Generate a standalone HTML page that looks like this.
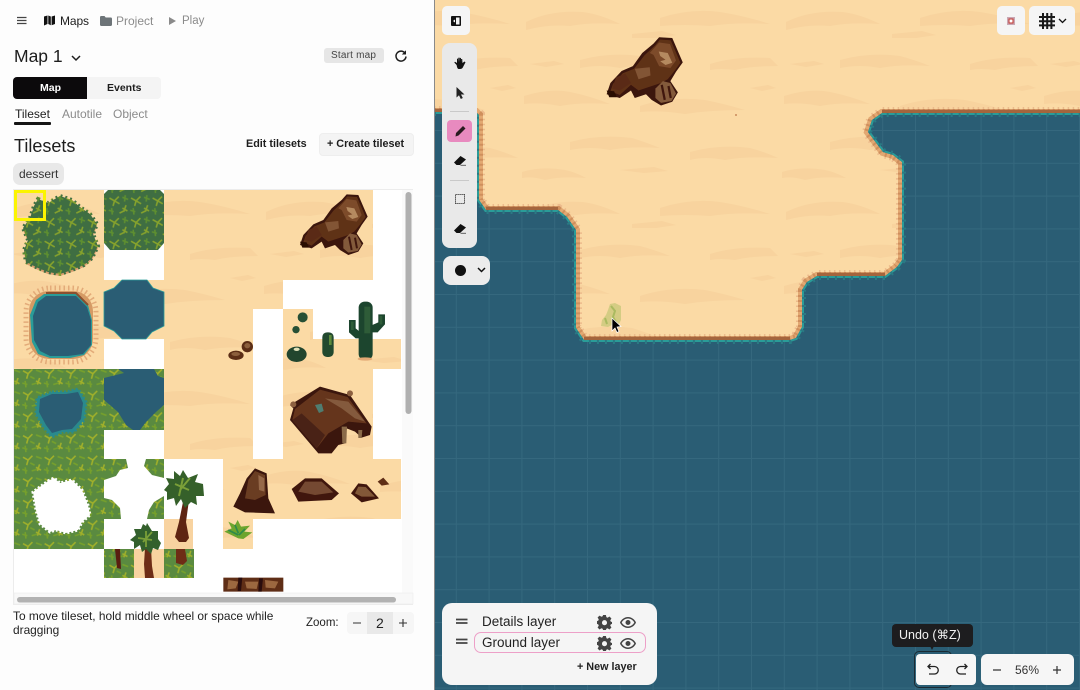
<!DOCTYPE html>
<html><head><meta charset="utf-8"><title>Map editor</title>
<style>
html,body{margin:0;padding:0;width:1080px;height:690px;overflow:hidden;background:#fff}
body{position:relative;font-family:"Liberation Sans","DejaVu Sans",sans-serif;color:#1d1d1d}
.t{position:absolute;white-space:nowrap;line-height:1}
.b{position:absolute}
svg.i{position:absolute;overflow:visible}
</style></head><body>
<svg class="i" style="left:0;top:0" width="1080" height="690" viewBox="0 0 1080 690">
<defs>
<filter id="soft" x="-5%" y="-5%" width="110%" height="110%"><feGaussianBlur stdDeviation=".8"/></filter>
<pattern id="sand" patternUnits="userSpaceOnUse" width="260" height="190">
<rect width="260" height="190" fill="#fbdaa5"/>
<g fill="#f8d39e">
<path d="M6 22Q30 10 62 12Q80 14 100 24Q70 22 50 26Q28 24 6 30Z"/>
<path d="M140 18Q170 8 200 12Q225 16 250 24Q215 22 190 26Q165 24 140 26Z"/>
<path d="M60 60Q90 52 120 56Q135 60 150 66Q120 64 100 68Q80 64 60 68Z"/>
<path d="M190 64Q215 56 250 58L258 66Q230 66 215 70Q200 68 190 70Z"/>
<path d="M4 96Q30 88 50 92Q70 96 90 104Q60 102 40 106Q20 102 4 104Z"/>
<path d="M120 106Q150 96 185 100Q205 104 225 110Q190 110 165 114Q140 110 120 112Z"/>
<path d="M50 142Q80 134 112 138Q125 142 140 148Q110 146 90 150Q70 146 50 150Z"/>
<path d="M170 152Q200 144 230 148Q245 152 258 158Q225 156 205 160Q185 156 170 160Z"/>
<path d="M2 172Q22 166 45 170Q55 172 66 178Q40 176 25 180Q12 176 2 178Z"/>
<path d="M112 34l30-3 14 4-20 3-24 0z"/>
<path d="M10 64l24-3 10 3-18 3z"/>
<path d="M230 88l18-3 8 3-14 3z"/>
<path d="M100 170l34-3 14 4-24 2z"/>
</g>
</pattern>
<pattern id="grid" patternUnits="userSpaceOnUse" x="915" y="130" width="32.8" height="32.8">
<rect width="32.8" height="32.8" fill="#2a5d74"/>
<path d="M.5 0V32.8M0 .5H32.8" stroke="#35687e" stroke-width="1" fill="none"/>
</pattern>
<pattern id="grass" patternUnits="userSpaceOnUse" width="30" height="30" patternTransform="scale(.72)">
<rect width="30" height="30" fill="#3f6e42"/>
<g fill="none" stroke="#86a22c" stroke-width="2.200">
<path d="M2 5l7 4 6-6M9 9l-2 7M9 9l7 4"/>
<path d="M20 19l7 4M25 15l-3 9M16 26l6-3"/>
</g>
<g fill="none" stroke="#5e8f30" stroke-width="2.200">
<path d="M20 4l8 3M24 1l-1 9M1 22l7 2M5 19l1 9"/>
</g>
</pattern>
<pattern id="grass2" patternUnits="userSpaceOnUse" width="30" height="30" patternTransform="scale(.72)">
<rect width="30" height="30" fill="#5a8a40"/>
<g fill="none" stroke="#a0b02a" stroke-width="2.200">
<path d="M2 5l7 4 6-6M9 9l-2 7"/>
<path d="M20 19l7 4M25 15l-3 9"/>
</g>
<g fill="none" stroke="#76a02c" stroke-width="2.200">
<path d="M20 4l8 3M1 22l7 2M5 19l1 9M12 13l6 3M14 24l7-2"/>
</g>
</pattern>
<clipPath id="mapc"><rect x="435" y="0" width="645" height="690"/></clipPath>
<path id="edge" d="M434 112H476L479 115V200L486 210H558L567 217L576 230V328L584 340H790L796 338L802 327V290L807 282L817 276H885L897 267L902 260V162L893 155L883 152L868 132L872 120L882 113H1080"/>
<path id="water" d="M434 112H476L479 115V200L486 210H558L567 217L576 230V328L584 340H790L796 338L802 327V290L807 282L817 276H885L897 267L902 260V162L893 155L883 152L868 132L872 120L882 113H1080V690H434Z"/>
<clipPath id="wc"><path d="M434 112H476L479 115V200L486 210H558L567 217L576 230V328L584 340H790L796 338L802 327V290L807 282L817 276H885L897 267L902 260V162L893 155L883 152L868 132L872 120L882 113H1080V690H434Z"/></clipPath>
<g id="rock" filter="url(#soft)">
<path d="M395 28L430 30L445 65L458 95L440 120L425 145L445 175L430 200L400 210L375 195L360 180L330 190L320 170L290 190L255 180L265 150L295 118L325 105L350 70L380 45Z" fill="#3a1208"/>
<path d="M397 34L426 36L440 68L452 96L436 118L418 140L400 150L370 160L340 170L320 155L290 182L265 172L272 152L298 124L328 112L356 76L384 50Z" fill="#5f3019"/>
<path d="M395 42L424 46L440 90L425 110L395 105L380 75L370 70Z" fill="#7d4c2c"/>
<path d="M394 66L418 70L430 96L412 102L398 92L412 88L398 78Z" fill="#b58a60"/>
<path d="M330 112L370 108L372 130L340 140Z" fill="#825434"/>
<path d="M280 135L305 125L320 150L290 170L270 165Z" fill="#5a2c18"/>
<path d="M385 165L405 145L425 150L440 178L428 198L400 203L385 190Z" fill="#835a3a"/>
<path d="M402 155L410 195M420 158L426 190" stroke="#3f180c" stroke-width="6" fill="none"/>
<path d="M255 170L275 172L282 188L262 188Z" fill="#2c0a06"/>
</g>
</defs>

<rect width="1080" height="690" fill="#fdfdfd"/>

<!-- MAP -->
<g clip-path="url(#mapc)">
<rect x="434" width="646" height="690" fill="url(#sand)"/>
<use href="#edge" fill="none" stroke="#ecbb8c" stroke-width="12" stroke-dasharray="1.500 3.500"/>
<use href="#edge" fill="none" stroke="#e2a872" stroke-width="8"/>
<use href="#edge" fill="none" stroke="#cf8f5c" stroke-width="8" stroke-dasharray="2 3"/>
<path d="M434 110.500H476M486 208.500H558M584 338.500H790M817 274.500H885M882 111.500H1080" fill="none" stroke="#a4653d" stroke-width="3.500"/>
<use href="#water" fill="url(#grid)"/>
<g clip-path="url(#wc)" fill="none">
<use href="#edge" stroke="#2a9c98" stroke-width="4"/>
<use href="#edge" stroke="#2a7a84" stroke-width="8" stroke-dasharray="2 6"/>
</g>
<use href="#rock" transform="translate(511 26.750) scale(.375)"/>
<circle cx="736" cy="115" r="1" fill="#c98a5c"/>
<g opacity=".75">
<path d="M610 304l5-1 6 3 0 14-3 6-6-1-4 2-7-1 1-6 4-5 2-5z" fill="#c8c878"/>
<path d="M611 306l4 5-2 6 3 5M605 318l2 6" stroke="#8fb04a" stroke-width="2" fill="none"/>
</g>
<path d="M612 318l0 13 3-3 2 4.500 2-1-2-4.500 4-.5z" fill="#000" stroke="#fff" stroke-width=".7"/>
</g>

<!-- TILESET -->
<g>
<rect x="13.500" y="189.500" width="399" height="415" fill="#fff" stroke="#ececec"/>
<rect x="14" y="190" width="90" height="180" fill="url(#sand)"/>
<rect x="164" y="190" width="209" height="90" fill="url(#sand)"/>
<rect x="164" y="280" width="119" height="29" fill="url(#sand)"/>
<rect x="164" y="309" width="89" height="150" fill="url(#sand)"/>
<rect x="283" y="309" width="30" height="30" fill="url(#sand)"/>
<rect x="283" y="339" width="118" height="30" fill="url(#sand)"/>
<rect x="283" y="369" width="90" height="90" fill="url(#sand)"/>
<rect x="223" y="459" width="178" height="60" fill="url(#sand)"/>
<rect x="223" y="519" width="30" height="30" fill="url(#sand)"/>
<rect x="164" y="519" width="29" height="30" fill="#f8d3a0"/>
<rect x="134" y="549" width="30" height="29" fill="#f8d3a0"/>
<!-- bush -->
<path d="M38 199L48 203L60 196L72 200L80 207L90 214L97 224L93 234L98 246L92 258L84 265L72 270L60 274L48 272L38 268L26 262L24 250L28 240L23 228L30 218L34 206Z" fill="#dca06f" transform="translate(0 2)"/>
<path d="M38 199L48 203L60 196L72 200L80 207L90 214L97 224L93 234L98 246L92 258L84 265L72 270L60 274L48 272L38 268L26 262L24 250L28 240L23 228L30 218L34 206Z" fill="url(#grass)" stroke="url(#grass)" stroke-width="4" stroke-dasharray="2 3"/>
<!-- grass tile -->
<path d="M108 190H160L164 194V243L158 250H110L104 243V194Z" fill="url(#grass)"/>
<!-- pond -->
<rect x="26" y="288" width="70" height="74" rx="24" fill="none" stroke="#e3ab79" stroke-width="5" stroke-dasharray="1.500 3"/>
<rect x="29" y="291" width="64" height="68" rx="20" fill="#d59a64"/>
<path d="M44 294H76L88 305L92 320V345L84 355L70 358H50L38 354L32 342L30 315L36 300Z" fill="#2a9c98"/>
<path d="M46 296H76L87 307L91 320V345L83 354L68 356H50L40 351L34 340L33 316L38 302Z" fill="#2a5d74"/>
<path d="M46 293H76L88 305" fill="none" stroke="#8a5030" stroke-width="2"/>
<!-- water tile 2 -->
<rect x="104" y="280" width="60" height="59" fill="url(#sand)"/>
<path d="M122 280H147L153 288L164 292V326L152 332L146 339H122L114 331L104 326V292L114 288Z" fill="#2a5d74" stroke="#2a9c98" stroke-width=".8"/>
<!-- grass big block -->
<rect x="14" y="369" width="90" height="180" fill="url(#grass2)"/>
<path d="M52 392H66L78 389L86 402L84 420L74 432L62 432L52 437L44 428L36 414L37 398Z" fill="#2a8a8c" stroke="#2a8a8c" stroke-width="3" stroke-dasharray="2 2"/>
<path d="M52 394H66L78 392L83 403L81 419L72 429L62 430L52 433L46 425L39 412L40 399Z" fill="#2a5d74"/>
<path d="M48 481L54 478L60 483L72 480L82 490L88 505L90 515L82 522L78 530L66 533L56 530L50 532L40 524L36 510L33 492Z" fill="#fff" stroke="#fff" stroke-width="3" stroke-dasharray="2 2"/>
<!-- water/grass tile -->
<rect x="104" y="369" width="60" height="61" fill="#2a5d74"/>
<path d="M104 369H118L124 373L104 378ZM154 369H164V378L158 376ZM104 400L118 412L126 425L133 430H104ZM164 405L156 412L146 422L140 430H164Z" fill="url(#grass2)"/>
<!-- grass corners -->
<path d="M104 459H126L128 468L120 470L116 476L104 480ZM146 459H164V478L152 475L144 466ZM104 498L112 500L120 508L121 519H104ZM164 496V519H147L149 510L154 502Z" fill="url(#grass2)"/>
<!-- tiles -->
<rect x="104" y="549" width="30" height="29" fill="url(#grass2)"/>
<rect x="164" y="549" width="30" height="29" fill="url(#grass2)"/>
<path d="M115 549h5l1 20-4-1z" fill="#5a1e10"/>
<path d="M176 549h9l2 12-4 4-7-2z" fill="#6e2c16"/>
<!-- palms -->
<path d="M184 497l5 3-3 22 3 16-3 4h-7l-4-5 4-15z" fill="#5e2412"/>
<path d="M183 470l5 8 10-4-3 8 8 2 1 12-8 0 1 9-6-3-6 6-4-9-5 7-2-8-7 2 0-8-3-2 5-6-3-6 8 1 0-8 6 5z" fill="#35602a"/>
<path d="M183 478l-4 18M175 484l14 6M190 478l-10 12" stroke="#7a9f38" stroke-width="2" fill="none"/>
<path d="M145 548l6 0 1 18 2 12h-9l-1-14z" fill="#6e2c16"/>
<path d="M147 523l5 8 6 0 0 8 3 4-3 7-5-2-2 6-5-5-4 3-2-7-6 4 0-7-4-2 6-5-2-6 7 0 2-5 3 2z" fill="#33602c"/>
<path d="M146 531l0 16M138 538l14 2M152 532l-9 10" stroke="#7a9f38" stroke-width="1.800" fill="none"/>
<!-- rock -->
<use href="#rock" transform="translate(215 185) scale(.3333)"/>
<!-- pebbles + cactus (zoom coordinates) -->
<g transform="translate(215 185) scale(.3333)" filter="url(#soft)">
<ellipse cx="97" cy="485" rx="17" ry="17" fill="#5c2f18"/>
<ellipse cx="63" cy="511" rx="23" ry="14" fill="#5c2f18"/>
<ellipse cx="97" cy="482" rx="9" ry="8" fill="#8c5f3c"/>
<ellipse cx="62" cy="507" rx="13" ry="6" fill="#8c5f3c"/>
<ellipse cx="245" cy="508" rx="30" ry="23" fill="#20452f"/>
<ellipse cx="245" cy="493" rx="9" ry="5" fill="#dfe0b8"/>
<circle cx="263" cy="397" r="15" fill="#284f35"/>
<circle cx="243" cy="434" r="11" fill="#284f35"/>
<rect x="322" y="442" width="34" height="74" rx="14" fill="#23482f"/>
<rect x="342" y="450" width="8" height="30" fill="#5b8a3a"/>
<rect x="431" y="350" width="42" height="175" rx="18" fill="#1f442d"/>
<path d="M402 405h20v25l12 10v20h-12l-20-18zM490 388h20v30l-22 24h-16v-22l18-8z" fill="#1f442d"/>
<rect x="448" y="365" width="18" height="80" fill="#2f5c38"/>
<path d="M408 410h8v25h-8zM494 393h8v25h-8z" fill="#2f5c38"/>
<ellipse cx="450" cy="522" rx="22" ry="5" fill="#e2a974"/>
</g>
<!-- tent + rocks (zoom coordinates) -->
<g transform="translate(215 385) scale(.3333)" filter="url(#soft)">
<path d="M225 60L315 5L405 30L470 125L465 150L440 158L420 140L395 130L390 175L370 180L350 205L310 205L225 105L235 70Z" fill="#3b160c"/>
<path d="M240 72L315 14L398 36L455 115L400 110L340 145L305 190L232 105Z" fill="#65361e"/>
<path d="M330 40L400 50L450 110L420 100L380 70Z" fill="#845a3c"/>
<path d="M232 105L305 190L330 150L260 85Z" fill="#4a2216"/>
<path d="M300 60l20-4 6 22-14 6z" fill="#4f7d70"/>
<path d="M380 125h16l-2 50h-12zM430 135h12l-2 24h-10z" fill="#8a6a48"/>
<circle cx="235" cy="58" r="9" fill="#8c6040"/>
<circle cx="405" cy="25" r="9" fill="#8c6040"/>
<path d="M120 250L155 265L160 340L180 385L90 382L55 365L75 325L95 280Z" fill="#3a140a"/>
<path d="M120 258L150 270L152 330L120 345L90 340L100 285Z" fill="#6a3c24"/>
<path d="M130 270L148 280L148 320L132 315Z" fill="#96694a"/>
<path d="M230 312L270 280L320 280L372 325L350 345L250 350Z" fill="#41180c"/>
<path d="M270 290L320 290L355 322L300 330L250 320Z" fill="#744a30"/>
<path d="M408 325L430 295L455 298L492 340L440 352Z" fill="#41180c"/>
<path d="M430 305L452 306L480 335L440 335L420 325Z" fill="#825838"/>
<path d="M488 290L505 278L523 298L500 302Z" fill="#5f2e18"/>
<path d="M70 460L28 440L50 430L40 410L60 420L68 405L78 425L105 422L88 440L112 442L85 462Z" fill="#6da52f"/>
<path d="M40 435L70 450M60 420L70 445M90 432L72 450" stroke="#2f8a4a" stroke-width="5" fill="none"/>
<rect x="25" y="578" width="180" height="42" fill="#5f2d16"/>
<path d="M40 585l30 5-8 20-25 3zM90 590l40 0-5 22-30-2zM150 585l40 5-10 20-28-2z" fill="#9c6840"/>
<path d="M70 578h12l-4 40h-10zM132 580h12l-4 40h-10z" fill="#2c0e08"/>
</g>
<rect x="15.500" y="191.500" width="29" height="28" fill="none" stroke="#fbf400" stroke-width="3"/>
<!-- scrollbars -->
<rect x="402" y="190" width="11" height="414" fill="#fafafa"/>
<rect x="14" y="593" width="399" height="11" fill="#f8f8f8" stroke="#ececec" stroke-width=".6"/>
<rect x="405.500" y="192" width="6" height="222" rx="3" fill="#b0b0b0"/>
<rect x="17" y="597" width="379" height="5.500" rx="2.700" fill="#b2b2b2"/>
</g>
<rect x="434" y="0" width="1" height="690" fill="#8a8a8a"/>
</svg>

<!-- header -->
<svg class="i" style="left:17px;top:16px" width="10" height="10" viewBox="0 0 10 10"><path d="M0 1.500H9.500M0 4.500H9.500M0 7.500H9.500" stroke="#444" stroke-width="1.200"/></svg>
<svg class="i" style="left:44px;top:15px" width="11" height="11" viewBox="0 0 11 11"><path d="M0 1.500L3.500.5V9L0 10.500ZM4.300.5L6.800 1.500V10.300L4.300 9ZM7.600 1.500L11 .5V9L7.600 10.300Z" fill="#111"/></svg>
<div class="t" style="left:60px;top:15px;font-size:12px;letter-spacing:-.1px">Maps</div>
<svg class="i" style="left:100px;top:16px" width="12" height="10" viewBox="0 0 12 10"><path d="M0 1.200Q0 0 1.200 0H4.500L5.700 1.500H10.800Q12 1.500 12 2.700V8.800Q12 10 10.800 10H1.200Q0 10 0 8.800Z" fill="#6d7478"/></svg>
<div class="t" style="left:116px;top:15px;font-size:12px;color:#8b8b8b">Project</div>
<svg class="i" style="left:169px;top:17px" width="7" height="8" viewBox="0 0 7 8"><path d="M0 0L7 4L0 8Z" fill="#8a8a8a"/></svg>
<div class="t" style="left:182px;top:15.500px;font-size:11.500px;color:#8b8b8b">Play</div>

<div class="t" style="left:14px;top:48px;font-size:17.500px">Map 1</div>
<svg class="i" style="left:71px;top:55px" width="10" height="6" viewBox="0 0 10 6"><path d="M1 1L5 5L9 1" fill="none" stroke="#1d1d1d" stroke-width="1.500"/></svg>
<div class="b" style="left:324px;top:48px;width:60px;height:15px;background:#e6e6e6;border-radius:3px"></div>
<div class="t" style="left:331px;top:51px;font-size:10px;letter-spacing:.2px;color:#444">Start map</div>
<svg class="i" style="left:395px;top:50px" width="12" height="12" viewBox="0 0 12 12"><path d="M10.300 3.500A5 5 0 1 0 11 6.500" fill="none" stroke="#1d1d1d" stroke-width="1.500"/><path d="M11 .3V4.500H6.800Z" fill="#1d1d1d"/></svg>

<div class="b" style="left:13px;top:77px;width:74px;height:22px;background:#0c0a0c;border-radius:4px 0 0 4px"></div>
<div class="b" style="left:87px;top:77px;width:74px;height:22px;background:#f4f4f4;border-radius:0 4px 4px 0"></div>
<div class="t" style="left:40px;top:83px;font-size:10.500px;font-weight:bold;color:#fff">Map</div>
<div class="t" style="left:107px;top:83px;font-size:10.500px;font-weight:bold">Events</div>

<div class="t" style="left:15px;top:108px;font-size:12px">Tileset</div>
<div class="t" style="left:62px;top:108px;font-size:12px;color:#8b8b8b">Autotile</div>
<div class="t" style="left:113px;top:108px;font-size:12px;color:#8b8b8b">Object</div>
<div class="b" style="left:14px;top:122px;width:37px;height:2.500px;background:#151515;border-radius:1px"></div>

<div class="t" style="left:14px;top:137px;font-size:18px">Tilesets</div>
<div class="t" style="left:246px;top:138.500px;font-size:10.800px;font-weight:bold">Edit tilesets</div>
<div class="b" style="left:319px;top:133px;width:93px;height:21px;background:#f4f4f4;border:1px solid #eee;border-radius:4px"></div>
<div class="t" style="left:327px;top:138.500px;font-size:10.800px;font-weight:bold">+ Create tileset</div>
<div class="b" style="left:13px;top:163px;width:51px;height:22px;background:#e8e8e8;border-radius:7px"></div>
<div class="t" style="left:19px;top:168px;font-size:12px;color:#333">dessert</div>

<!-- footer -->
<div class="t" style="left:13px;top:611px;font-size:11.900px;color:#222">To move tileset, hold middle wheel or space while</div>
<div class="t" style="left:13px;top:625px;font-size:11.900px;color:#222">dragging</div>
<div class="t" style="left:306px;top:618px;font-size:11.500px;color:#222">Zoom:</div>
<div class="b" style="left:347px;top:612px;width:67px;height:22px;background:#f6f6f6;border-radius:4px"></div>
<div class="b" style="left:367px;top:612px;width:26px;height:22px;background:#e9e9e9"></div>
<svg class="i" style="left:352px;top:618px" width="56" height="10" viewBox="0 0 56 10"><path d="M1 5H9M47 5H55M51 1V9" stroke="#333" stroke-width="1.100"/></svg>
<div class="t" style="left:376px;top:616px;font-size:14px;color:#222">2</div>

<!-- map left tools -->
<div class="b" style="left:442px;top:6px;width:28px;height:29px;background:#f5f5f5;border-radius:5px"></div>
<svg class="i" style="left:451px;top:16px" width="10" height="10" viewBox="0 0 10 10"><path d="M1 0H9Q10 0 10 1V9Q10 10 9 10H1Q0 10 0 9V1Q0 0 1 0ZM5 1.500V8.500H8.500V1.500Z" fill="#111" fill-rule="evenodd"/><path d="M4 3.500L2 5L4 6.500Z" fill="#fff"/></svg>

<div class="b" style="left:442px;top:43px;width:35px;height:205px;background:#e9e9e9;border-radius:8px"></div>
<svg class="i" style="left:454px;top:57px" width="12" height="12" viewBox="0 0 12 12"><path d="M2.600 8L.3 5.500L1 4.700L3 6V1.800L4 1.600L4.300 5V.8L5.400.6L5.700 5V.8L6.900 1L7.100 5.300V2L8.200 2L8.500 6L10.500 4.500L11.500 5.200L8.800 10.500Q8 12 6 12H4.500Q3.300 12 2.600 8Z" fill="#111"/></svg>
<svg class="i" style="left:456px;top:87px" width="9" height="12" viewBox="0 0 9 12"><path d="M.5 0V10.500L3 8.300L4.800 12L6.800 11L5 7.500H8.500Z" fill="#222"/></svg>
<div class="b" style="left:450px;top:111px;width:19px;height:1px;background:#c9c9c9"></div>
<div class="b" style="left:447px;top:120px;width:25px;height:22px;background:#e88abf;border-radius:4px"></div>
<svg class="i" style="left:454.500px;top:125px" width="11" height="12" viewBox="0 0 11 12"><path d="M.5 11.500L1 8L8 1L10.500 3.500L3.500 10.500Z" fill="#2a1a20"/></svg>
<svg class="i" style="left:454px;top:155px" width="12" height="11" viewBox="0 0 12 11"><path d="M0 7.500L6.500 1L12 4.500L6 10H2.500Z" fill="#111"/><path d="M6.500 10.300H12" stroke="#555" stroke-width=".9"/></svg>
<div class="b" style="left:450px;top:180px;width:19px;height:1px;background:#c9c9c9"></div>
<svg class="i" style="left:455px;top:194px" width="10" height="10" viewBox="0 0 10 10"><rect x=".5" y=".5" width="9" height="9" fill="none" stroke="#333" stroke-width="1" stroke-dasharray="1.200 .8"/></svg>
<svg class="i" style="left:454px;top:223px" width="12" height="11" viewBox="0 0 12 11"><path d="M0 7.500L6.500 1L12 4.500L6 10H2.500Z" fill="#111"/><path d="M6.500 10.300H12" stroke="#555" stroke-width=".9"/></svg>

<div class="b" style="left:443px;top:256px;width:47px;height:29px;background:#ececec;border-radius:8px"></div>
<div class="b" style="left:454.500px;top:264.500px;width:11px;height:11px;background:#111;border-radius:50%"></div>
<svg class="i" style="left:477px;top:267px" width="9" height="6" viewBox="0 0 9 6"><path d="M1 1L4.500 4.500L8 1" fill="none" stroke="#111" stroke-width="1.500"/></svg>

<!-- map top right -->
<div class="b" style="left:997px;top:6px;width:28px;height:29px;background:#f5f5f5;border-radius:5px"></div>
<svg class="i" style="left:1007px;top:17px" width="8" height="8" viewBox="0 0 8 8"><rect width="8" height="8" fill="#c9a8b4"/><rect x="2" y="2" width="4" height="4" fill="#fff" stroke="#c2352e" stroke-width="1"/></svg>
<div class="b" style="left:1029px;top:6px;width:46px;height:29px;background:#f5f5f5;border-radius:5px"></div>
<svg class="i" style="left:1039px;top:13px" width="16" height="16" viewBox="0 0 16 16"><path d="M4 0V16M8.200 0V16M12.400 0V16M0 4H16M0 8.200H16M0 12.400H16" stroke="#1a1a1a" stroke-width="2"/></svg>
<svg class="i" style="left:1058px;top:18px" width="9" height="6" viewBox="0 0 9 6"><path d="M1 1L4.500 4.500L8 1" fill="none" stroke="#111" stroke-width="1.300"/></svg>

<!-- layers -->
<div class="b" style="left:442px;top:603px;width:215px;height:82px;background:#f5f5f5;border-radius:10px"></div>
<svg class="i" style="left:456px;top:618px" width="12" height="30" viewBox="0 0 12 30"><path d="M0 1.500H11.500M0 5H11.500M0 21.500H11.500M0 25H11.500" stroke="#444" stroke-width="1.800"/></svg>
<div class="t" style="left:482px;top:615px;font-size:13.500px;color:#222">Details layer</div>
<div class="b" style="left:474px;top:632px;width:170px;height:19px;border:1px solid #eda0c8;border-radius:7px"></div>
<div class="t" style="left:482px;top:636px;font-size:13.500px;color:#222">Ground layer</div>
<svg class="i" style="left:597px;top:615px" width="15" height="15" viewBox="0 0 16 16"><path fill="#444" fill-rule="evenodd" d="M6.500 0H9.500L10 2.300L11.300 2.900L13.300 1.600L15.400 3.700L14.100 5.700L14.700 7L16 7.500V9.500L14.700 10L14.100 11.300L15.400 13.300L13.300 15.400L11.300 14.100L10 14.700L9.500 16H6.500L6 14.700L4.700 14.100L2.700 15.400L.6 13.300L1.900 11.300L1.300 10L0 9.500V6.500L1.300 6L1.900 4.700L.6 2.700L2.700.6L4.700 1.900L6 1.300ZM8 5.500A2.700 2.700 0 1 0 8 10.900A2.700 2.700 0 1 0 8 5.500Z"/></svg>
<svg class="i" style="left:597px;top:636px" width="15" height="15" viewBox="0 0 16 16"><path fill="#444" fill-rule="evenodd" d="M6.500 0H9.500L10 2.300L11.300 2.900L13.300 1.600L15.400 3.700L14.100 5.700L14.700 7L16 7.500V9.500L14.700 10L14.100 11.300L15.400 13.300L13.300 15.400L11.300 14.100L10 14.700L9.500 16H6.500L6 14.700L4.700 14.100L2.700 15.400L.6 13.300L1.900 11.300L1.300 10L0 9.500V6.500L1.300 6L1.900 4.700L.6 2.700L2.700.6L4.700 1.900L6 1.300ZM8 5.500A2.700 2.700 0 1 0 8 10.900A2.700 2.700 0 1 0 8 5.500Z"/></svg>
<svg class="i" style="left:620px;top:617px" width="16" height="11" viewBox="0 0 16 11"><path fill="#444" fill-rule="evenodd" d="M8 0C12 0 15 3 16 5.500C15 8 12 11 8 11C4 11 1 8 0 5.500C1 3 4 0 8 0ZM8 1.500C5 1.500 2.800 3.500 1.700 5.500C2.800 7.500 5 9.500 8 9.500C11 9.500 13.200 7.500 14.300 5.500C13.200 3.500 11 1.500 8 1.500ZM8 3A2.500 2.500 0 1 1 8 8A2.500 2.500 0 1 1 8 3Z"/></svg>
<svg class="i" style="left:620px;top:638px" width="16" height="11" viewBox="0 0 16 11"><path fill="#444" fill-rule="evenodd" d="M8 0C12 0 15 3 16 5.500C15 8 12 11 8 11C4 11 1 8 0 5.500C1 3 4 0 8 0ZM8 1.500C5 1.500 2.800 3.500 1.700 5.500C2.800 7.500 5 9.500 8 9.500C11 9.500 13.200 7.500 14.300 5.500C13.200 3.500 11 1.500 8 1.500ZM8 3A2.500 2.500 0 1 1 8 8A2.500 2.500 0 1 1 8 3Z"/></svg>
<div class="t" style="left:577px;top:662px;font-size:10.800px;font-weight:bold;color:#222">+ New layer</div>

<!-- undo -->
<div class="b" style="left:892px;top:624px;width:81px;height:23px;background:#1d1d1f;border-radius:4px"></div>
<div class="b" style="left:930px;top:646px;width:0;height:0;border-left:2.500px solid transparent;border-right:2.500px solid transparent;border-top:4px solid #1d1d1f"></div>
<div class="t" style="left:899px;top:629px;font-size:12.500px;color:#f2f2f2">Undo (⌘Z)</div>
<div class="b" style="left:914px;top:651px;width:36px;height:35px;border:1.500px solid #1a2a33;border-radius:5px"></div>
<div class="b" style="left:916px;top:654px;width:60px;height:31px;background:#f6f6f6;border-radius:4px"></div>
<svg class="i" style="left:927px;top:663px" width="12" height="13" viewBox="0 0 12 13"><path d="M3.500 1L1 3.500L3.500 6M1 3.500H7.500A3.700 3.700 0 0 1 7.500 11H2" fill="none" stroke="#222" stroke-width="1.300"/></svg>
<svg class="i" style="left:956px;top:663px" width="12" height="13" viewBox="0 0 12 13"><path d="M8.500 1L11 3.500L8.500 6M11 3.500H4.500A3.700 3.700 0 0 0 4.500 11H10" fill="none" stroke="#222" stroke-width="1.300"/></svg>
<div class="b" style="left:981px;top:654px;width:93px;height:31px;background:#f6f6f6;border-radius:6px"></div>
<svg class="i" style="left:993px;top:665px" width="69" height="10" viewBox="0 0 69 10"><path d="M0 5H8M60 5H68M64 1V9" stroke="#333" stroke-width="1.200"/></svg>
<div class="t" style="left:1015px;top:664px;font-size:12px;color:#333">56%</div>
</body></html>
